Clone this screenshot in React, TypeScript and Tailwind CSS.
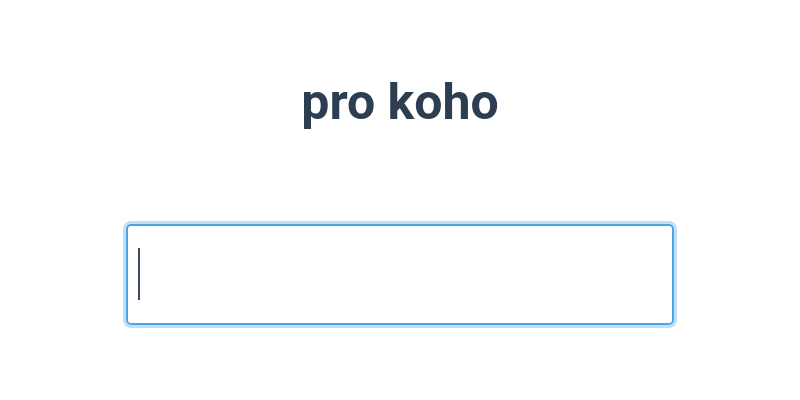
import { useEffect, useRef } from "react";

export default function App() {
  const inputRef = useRef<HTMLInputElement>(null);

  useEffect(() => {
    inputRef.current?.focus();
  }, []);

  return (
    <div className="flex min-h-[400px] flex-col items-center bg-white font-['Roboto',sans-serif] text-[#2c3e50]">
      <h1 className="pt-[77px] text-[50px] font-bold leading-[50px]">pro koho</h1>
      <div className="relative mt-[97px]">
        <input
          ref={inputRef}
          autoFocus
          type="text"
          className="h-[101px] w-[548px] rounded-[5px] border-2 border-[#4da3e4] px-[10px] text-[44px] text-[#2c3e50] caret-transparent shadow-[0_0_0_3px_rgba(77,163,228,0.35)] outline-none"
        />
        {/* caret drawn by hand, headless focus doesn't paint one */}
        <span className="pointer-events-none absolute left-[12px] top-[24px] h-[52px] w-[2px] bg-[#3b4a5c]" />
      </div>
    </div>
  );
}
